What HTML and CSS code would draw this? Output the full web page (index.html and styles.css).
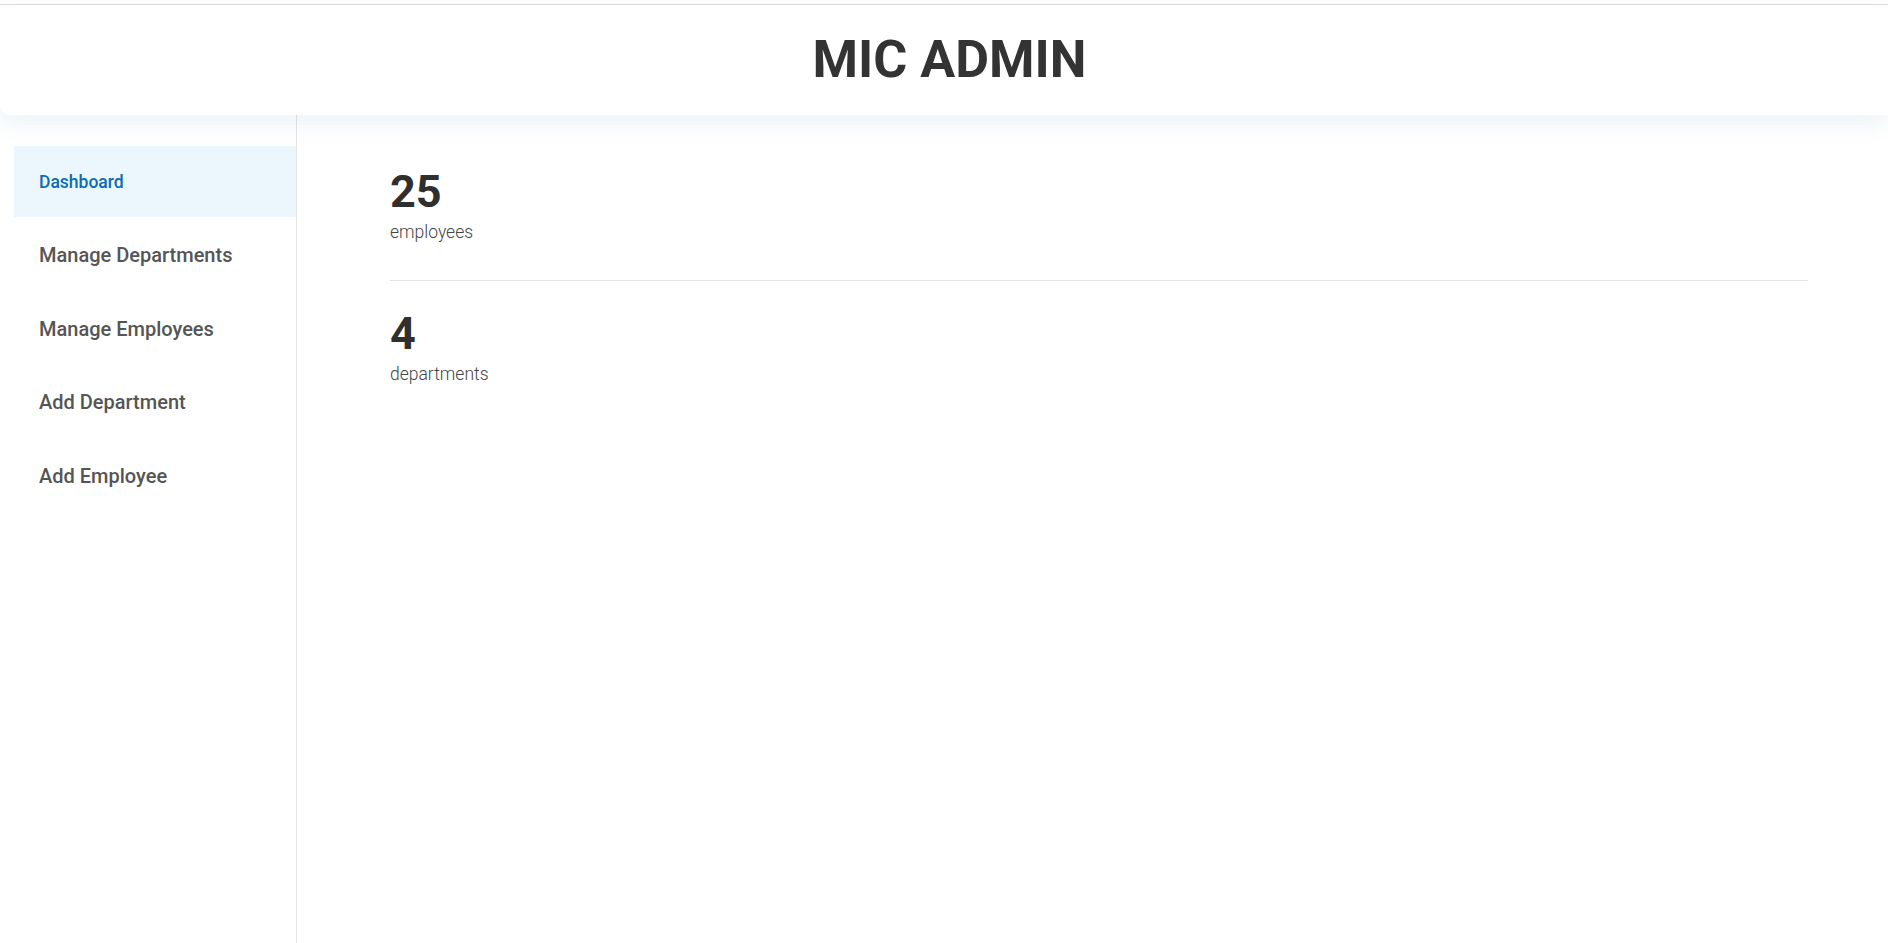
FILE: index.html
```html
<!DOCTYPE html>
<html lang="en">
<head>
<meta charset="utf-8">
<title>MIC ADMIN</title>
<link rel="stylesheet" href="styles.css">
</head>
<body>
<div class="page">
  <header class="topbar">
    <h1 class="title">MIC ADMIN</h1>
  </header>
  <div class="layout">
    <nav class="sidebar">
      <a class="nav-item active" href="#">Dashboard</a>
      <a class="nav-item" href="#">Manage Departments</a>
      <a class="nav-item" href="#">Manage Employees</a>
      <a class="nav-item" href="#">Add Department</a>
      <a class="nav-item" href="#">Add Employee</a>
    </nav>
    <main class="content">
      <section class="stat">
        <div class="stat-value">25</div>
        <div class="stat-label">employees</div>
      </section>
      <hr class="divider">
      <section class="stat">
        <div class="stat-value">4</div>
        <div class="stat-label">departments</div>
      </section>
    </main>
  </div>
</div>
</body>
</html>
```

FILE: styles.css
```css
html, body {
  margin: 0;
  padding: 0;
  height: 100%;
  background: #ffffff;
  font-family: Roboto, "Noto Sans", Arial, sans-serif;
  color: #333333;
}

.page {
  height: 100%;
  display: flex;
  flex-direction: column;
  overflow: hidden;
  padding-top: 4px;
  box-sizing: border-box;
}

.topbar {
  position: relative;
  z-index: 2;
  height: 110px;
  border-top: 1px solid #d9d9d9;
  background: #ffffff;
  border-bottom-left-radius: 11px;
  box-shadow: 0 10px 22px rgba(30, 110, 160, 0.08);
  display: flex;
  align-items: center;
  justify-content: center;
  padding-left: 11px;
  flex: none;
}

.title {
  margin: 0;
  font-size: 52px;
  font-weight: 700;
  color: #333333;
  line-height: 1;
}

.layout {
  flex: 1;
  display: flex;
  min-height: 0;
}

.sidebar {
  width: 282px;
  flex: none;
  padding: 31px 0 0 14px;
  border-right: 1px solid #e4e4e4;
  display: flex;
  flex-direction: column;
  gap: 2.5px;
}

.nav-item {
  display: flex;
  align-items: center;
  height: 71px;
  padding-left: 25px;
  font-size: 20px;
  font-weight: 500;
  color: #555555;
  text-decoration: none;
}

.nav-item.active {
  background: #ecf7fd;
  color: #0b6bb3;
  font-size: 17.5px;
}

.content {
  flex: 1;
  padding: 54px 80px 0 93px;
}

.stat {
  display: flex;
  flex-direction: column;
}

.stat-value {
  font-size: 45px;
  font-weight: 700;
  color: #2f2f2f;
  line-height: 1;
}

.stat-label {
  font-size: 17.5px;
  font-weight: 300;
  color: #444444;
  line-height: 1;
  margin-top: 10px;
}

.divider {
  border: 0;
  border-top: 1px solid #e3e3e3;
  margin: 38px 0 30px 0;
}
```
